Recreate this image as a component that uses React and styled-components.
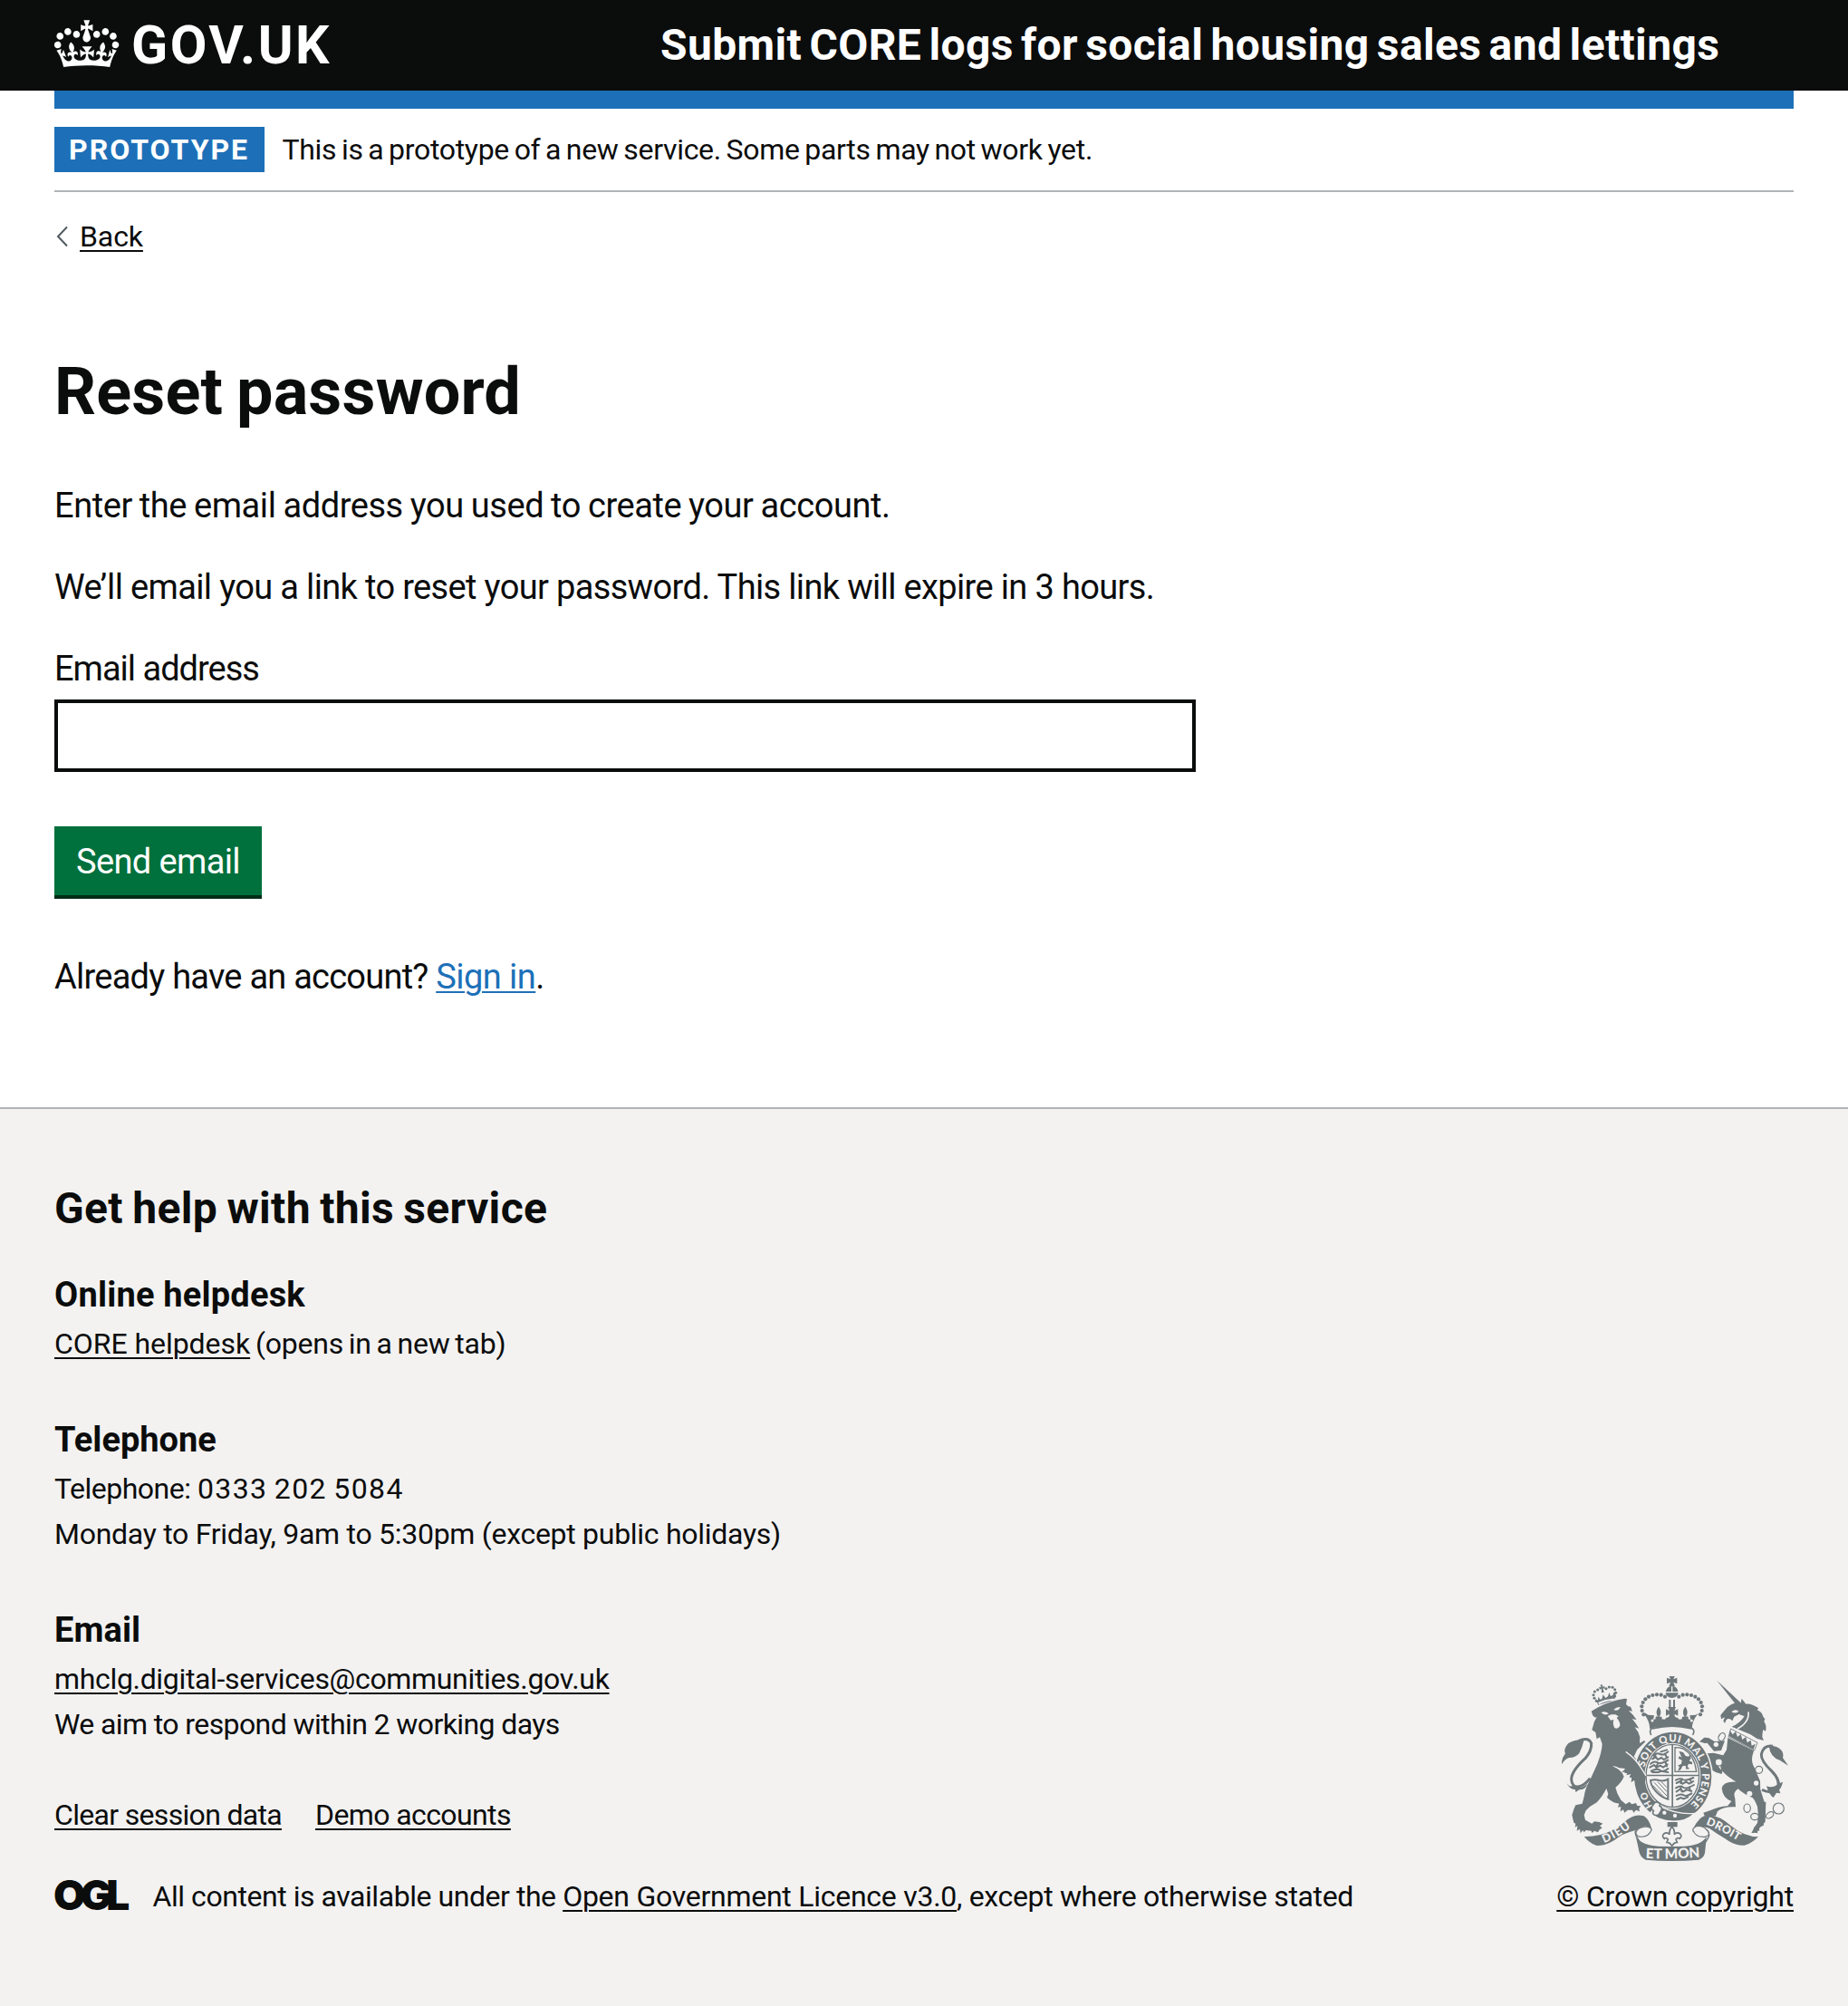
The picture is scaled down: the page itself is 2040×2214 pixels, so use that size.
import React from "react";
import styled, { createGlobalStyle } from "styled-components";

const ink = "#0b0c0c";
const paper = "#f3f2f1";
const blue = "#1d70b8";
const green = "#00703c";
const rule = "#b1b4b6";
const crestGrey = "#6e777a";

const GlobalStyle = createGlobalStyle`
  *, *::before, *::after { box-sizing: border-box; }
  body {
    margin: 0;
    background: ${paper};
    color: ${ink};
    font-family: Roboto, "Noto Sans", sans-serif;
  }
  h1, h2, h3, p, ul { margin: 0; padding: 0; }
`;

/* ---------- shared text ---------- */

const Run = styled.span`
  letter-spacing: ${(p) => p.$track || 0}px;
  word-spacing: ${(p) => p.$words || 0}px;
  white-space: pre;
`;

const Link = styled.a`
  color: ${(p) => (p.$inBody ? blue : ink)};
  letter-spacing: ${(p) => p.$track || 0}px;
  text-decoration: underline;
  text-decoration-thickness: 2px;
  text-underline-offset: ${(p) => (p.$inBody ? 3 : 4)}px;
  white-space: pre;
`;

/* ---------- header ---------- */

const Header = styled.header`
  height: 120px;
  padding: 0 60px;
  background: linear-gradient(${ink} 100px, #fff 100px);
`;

const HeaderInner = styled.div`
  display: flex;
  height: 120px;
  border-bottom: 20px solid ${blue};
`;

const LogoLink = styled.a`
  display: flex;
  width: 669px;
  padding-top: 14px;
  color: #fff;
`;

const LogoText = styled.span`
  margin-left: 13px;
  font-size: 59px;
  font-weight: 700;
  line-height: 72px;
  letter-spacing: 2.5px;
`;

const ServiceName = styled.span`
  padding-top: 20px;
  color: #fff;
  font-size: 48px;
  font-weight: 700;
  line-height: 60px;
  letter-spacing: 0.36px;
  word-spacing: -4px;
  white-space: nowrap;
`;

/* ---------- main ---------- */

const Page = styled.div`
  padding: 0 60px;
  background: #fff;
`;

const PhaseBanner = styled.div`
  display: flex;
  gap: 19.5px;
  padding: 20px 0;
  border-bottom: 2px solid ${rule};
  font-size: 32px;
  line-height: 50px;
`;

const Tag = styled.strong`
  width: 232px;
  padding-left: 16px;
  background: ${blue};
  color: #fff;
  font-weight: 700;
  letter-spacing: 2px;
`;

const BackRow = styled.div`
  display: flex;
  align-items: center;
  gap: 13px;
  height: 40px;
  margin: 29px 0 31px;
  padding-left: 2px;
  font-size: 32px;
  line-height: 40px;
`;

const Main = styled.main`
  padding: 80px 0;
  font-size: 38px;
  line-height: 50px;
`;

const Title = styled.h1`
  padding-top: 1px;
  margin-bottom: 60px;
  font-size: 72px;
  font-weight: 700;
  line-height: 80px;
  letter-spacing: 0.15px;
  word-spacing: -3px;
`;

const Paragraph = styled.p`
  margin-bottom: 40px;
`;

const Label = styled.label`
  display: block;
  margin-bottom: 9px;
`;

const EmailInput = styled.input`
  display: block;
  width: 1260px;
  height: 80px;
  margin-bottom: 60px;
  padding: 10px;
  border: 4px solid ${ink};
  border-radius: 0;
  background: #fff;
  font: inherit;
`;

const SubmitButton = styled.button`
  display: block;
  width: 229px;
  height: 76px;
  margin-bottom: 65px;
  padding: 2px 0 0 24px;
  border: 0;
  background: ${green};
  box-shadow: 0 4px 0 #002d18;
  color: #fff;
  font: 400 38px/74px Roboto, "Noto Sans", sans-serif;
  letter-spacing: -0.62px;
  text-align: left;
`;

const AccountLine = styled.p`
  margin-bottom: 39px;
`;

/* ---------- footer ---------- */

const Footer = styled.footer`
  min-height: 992px;
  padding: 80px 60px 0;
  border-top: 2px solid ${rule};
  background: ${paper};
  font-size: 32px;
  line-height: 50px;
`;

const FooterTitle = styled.h2`
  margin-bottom: 40px;
  font-size: 48px;
  line-height: 60px;
  letter-spacing: 0.35px;
  word-spacing: -2px;
`;

const FooterBottom = styled.div`
  display: flex;
  justify-content: space-between;
  align-items: flex-end;
`;

const Contact = styled.section`
  margin-bottom: ${(p) => (p.$last ? 50 : 56)}px;
`;

const ContactTitle = styled.h3`
  margin-bottom: 4px;
  font-size: 38px;
  line-height: 50px;
  letter-spacing: ${(p) => p.$track || 0}px;
`;

const InlineLinks = styled.div`
  display: flex;
  gap: 37px;
  margin-bottom: 40px;
`;

const Licence = styled.div`
  display: flex;
  white-space: nowrap;
`;

const LicenceMark = styled.span`
  width: 109.5px;
  margin-left: -1px;
  font-family: Inter, sans-serif;
  font-size: 46px;
  font-weight: 900;
  line-height: 46px;
  letter-spacing: -6px;
`;

const CopyrightBlock = styled.div`
  display: flex;
  flex-direction: column;
  align-items: flex-end;
  gap: 14px;
`;

const CrestSvg = styled.svg`
  display: block;
  width: 250px;
  height: 204px;
  margin-right: 6px;
`;

const CrestText = styled.text`
  fill: ${paper};
  font-family: Lato, sans-serif;
  font-weight: 900;
  font-size: ${(p) => p.$size}px;
  letter-spacing: ${(p) => p.$track || 0}px;
`;

function Crown() {
  return (
    <svg width="72" height="60" viewBox="0 0 36 30" fill="currentColor" aria-hidden="true">
      <path d="M6.7 12.2c1 .4 2.1-.1 2.5-1s-.1-2.1-1-2.5c-1-.4-2.1.1-2.5 1-.4 1 0 2.1 1 2.5m-4.3 2.5c1 .4 2.1-.1 2.5-1s-.1-2.1-1-2.5c-1-.4-2.1.1-2.5 1-.5 1 0 2.1 1 2.5m-1.3 4.8c1 .4 2.1-.1 2.5-1s-.1-2.1-1-2.5c-1-.4-2.1.1-2.5 1-.4 1 0 2.1 1 2.5m10.4-5.8c1 .4 2.1-.1 2.5-1s-.1-2.1-1-2.5c-1-.4-2.1.1-2.5 1s0 2.1 1 2.5m17.4-1.5c-1 .4-2.1-.1-2.5-1s.1-2.1 1-2.5c1-.4 2.1.1 2.5 1 .5 1 0 2.1-1 2.5m4.3 2.5c-1 .4-2.1-.1-2.5-1s.1-2.1 1-2.5c1-.4 2.1.1 2.5 1 .5 1 0 2.1-1 2.5m1.3 4.8c-1 .4-2.1-.1-2.5-1s.1-2.1 1-2.5c1-.4 2.1.1 2.5 1 .4 1 0 2.1-1 2.5m-10.4-5.8c-1 .4-2.1-.1-2.5-1s.1-2.1 1-2.5c1-.4 2.1.1 2.5 1s0 2.1-1 2.5m-5.3-4.9 2.4 1.3V6.5l-2.4.8c-.1-.1-.1-.2-.2-.2s1-3 1-3h-3.4l1 3c-.1.1-.2.1-.2.2-.1.1-2.4-.7-2.4-.7v3.5L17 8.8c-.1.1.1.2.2.3l-1.4 4.2c-.1.2-.1.4-.1.7 0 1.1.8 2.1 1.9 2.2h.6C19.2 16 20 15.1 20 14c0-.2 0-.4-.1-.7l-1.4-4.2c.2-.1.3-.2.3-.3m-1 20.3c4.6 0 8.9.3 12.8.9 1.1-4.6 2.4-7.2 3.8-9.1l-2.6-.9c.3 1.3.3 1.9 0 2.8-.4-.4-.8-1.2-1.1-2.4l-1.2 4.2c.8-.5 1.3-.9 2-.9-1.1 2.6-2.7 3.2-3.6 3-1.2-.2-1.7-1.3-1.5-2.2.3-1.2 1.6-1.5 2.1-.1 1.1-2.4-.8-3.1-2.1-2.4 1.9-1.9 2.2-3.6.6-5.7-2.2 1.7-2.2 3.3-1.2 5.6-1.3-1.5-3.3-.7-2.5 1.7.9-1.4 2.1-.5 2 .8-.2 1.2-1.7 2.1-3.7 2-2.8-.2-3-2.2-3-3.7.7-.1 1.9.6 3 2l.4-4.4c-1.1 1.2-2.2 1.4-3.3 1.4.4-1.2 2.1-3.1 2.1-3.1h-5.5s1.8 2 2.1 3.1c-1.1 0-2.2-.3-3.3-1.4l.4 4.4c1-1.4 2.3-2.1 3-2-.1 1.6-.2 3.5-3 3.7-1.9.2-3.5-.8-3.7-2-.2-1.3 1-2.2 2-.8.7-2.3-1.2-3.1-2.5-1.7 1-2.3 1-4-1.2-5.6-1.6 2-1.3 3.8.6 5.7-1.3-.7-3.2 0-2.1 2.4.5-1.4 1.8-1.1 2.1.1.2.9-.4 1.9-1.5 2.2-.9.2-2.5-.5-3.6-3 .7 0 1.3.4 2 .9L5 20.4c-.3 1.2-.7 1.9-1.2 2.4-.3-.8-.2-1.5 0-2.8l-2.6.9C2.7 22.8 4 25.4 5.1 30c3.8-.5 8.2-.9 12.7-.9" />
    </svg>
  );
}

/* Beads of the royal crown, left arch then right arch */
const crownBeads = [
  [343, 187], [338, 174], [337, 160], [341, 147], [349, 136], [360, 128], [373, 123], [387, 121], [401, 122], [414, 128],
  [531, 187], [536, 174], [537, 160], [533, 147], [525, 136], [514, 128], [501, 123], [487, 121], [473, 122], [460, 128],
];
const lionBeads = [
  [187, 142], [180, 133], [177, 122], [181, 111], [191, 105],
  [248, 126], [251, 115], [248, 104], [240, 97], [229, 96], [219, 101],
];

function Crest() {
  const g = crestGrey;
  const b = paper;
  return (
    <CrestSvg viewBox="72 60 750 612" fill={g} stroke="none" role="img" aria-label="Royal coat of arms">
      {/* royal crown */}
      <path d="M428 60h18l-4 10 12-5v20l-12-5 5 14h-20l5-14-12 5v-20l12 5z" />
      <path d="M417 111a20 18 0 0 1 18-18v18zM439 93a20 18 0 0 1 18 18h-18zM416 115h42a21 17 0 0 1-42 0z" />
      {crownBeads.map(([x, y]) => (
        <circle key={`${x}-${y}`} cx={x} cy={y} r="6.3" />
      ))}
      <path d="M427 138h6v30h-6zM441 138h6v30h-6z" />
      <path d="M349 182l9 6 20 2-3 14 8-2c-2-7 2-12 8-7-7-12-7-22 2-34 9 12 9 22 2 34 6-4 11 0 8 7l10 1 8-8-1 4 8-6v-8l-11 6v-22l12 6-5-13h26l-5 13 12-6v22l-11-6v8l8 6-1-4 8 8 10-1c-3-7 2-11 8-7-7-12-7-22 2-34 9 12 9 22 2 34 6-5 10 0 8 7l8 2-3-14 20-2 9-6c-17 20-22 38-21 52-40-11-101-11-141 0 1-14-4-32-21-52z" />
      <circle cx="372" cy="207" r="4.5" fill={b} />
      <circle cx="502" cy="207" r="4.5" fill={b} />
      <path d="M368 255c-7-15-2-22 7-22 40-10 85-10 124 0 10 0 14 7 7 22" fill="none" stroke={g} strokeWidth="5" />

      {/* lion crown */}
      {lionBeads.map(([x, y]) => (
        <circle key={`${x}-${y}`} cx={x} cy={y} r="4.6" />
      ))}
      <path transform="translate(206 102) rotate(-12)" d="M-4-14h8l-2 8 7-2v9l-7-2 2 13h-9l3-13-7 2v-9l7 2z" />
      <path d="M184 136l8 5 1-13 7 9 5-2 4-14 8 11 8-5 4-13 5 12 7-3 3-9 8-2-5 27-54 16z" />
      <path d="M192 147q28-14 56-13l-2 6q-28 1-50 14z" fill={b} />

      {/* lion */}
      <path d="M172 182L170 176 190 164Q235 141 280 134L288 135 285 153 292 160 300 161 306 176 294 174 308 188 320 205 305 201 317 216 328 233 314 229 325 245 331 262 330 282 345 273 349 277 322 303 311 326 334 352 348 380 351 400 346 412 340 402 336 418 326 408 316 416 314 404 302 410 304 396 296 394 302 384 286 388 292 376 270 378 284 366 262 364Q250 356 240 358 272 372 278 392 270 412 250 428L256 448 268 470 284 484 296 476 304 484 318 480 322 489 334 490 328 498 330 508 318 503 310 512 306 503 290 503 280 512 276 502 266 508 268 492 258 494 262 482 244 478 232 470 222 462 226 450 220 432Q204 462 188 478L165 492 152 505 146 520 150 536 172 548 180 541 196 543 208 548 198 556 206 562 196 569 192 577 180 572 172 579 170 572 152 570 146 577 142 570 134 580 132 566 122 572 124 556 116 560 118 548 112 545 106 520 112 500 118 487 140 482 146 458Q150 430 165 405L190 350Q205 310 206 284L198 262 188 268 184 246 172 238 180 210 188 196Q176 198 172 182Z" />
      <path d="M202 180q14-6 26 4-14 8-26-4zM244 172q8-10 22-10-4 14-22 10z" fill={b} />
      <path d="M224 192l12-5h14l10 6-6 5q14 16 10 28-8 12-18 4-6-12-2-26l-10 2z" fill={b} />
      {/* lion tail */}
      <path d="M128 274q32-14 42 8 2 24-20 50-46 42-46 70 2 26 22 24 20-2 40-28" fill="none" stroke={g} strokeWidth="9" />
      <path d="M146 270q-28-2-52 12-18 20-10 34-14 18-12 36 10-18 24-22 22 0 34-15 10-18 16-45z" />
      <path d="M88 412q8 18 22 10 20 16 48-6-8 20-28 20l-12 8-1-8q-22-2-29-24z" />

      {/* unicorn */}
      <path d="M586 74l72 92 12-13z" />
      <path d="M662 162l6-28 14 18q18-2 42 14l-5 6q16 6 20 22l6 8-3 8q10 14 5 32l-8-5q-3 12-3 24l5 12-22-6-22-14-62-26q24-8 42-34l-18-7-16 8-6 14q-10-12-20-4l-5 12-5-8 5-12-12 6-2-13 22-26q18-16 42-17z" />
      <path d="M634 178q14-12 24-2-10 10-24 2z" fill={b} />
      <path d="M690 178q4 34-36 56" fill="none" stroke={b} strokeWidth="5" />
      <path d="M632 234l88 46-10 26-86-45z" fill={b} stroke={g} strokeWidth="2.5" />
      <path d="M626 259l3-20 9 14 10-10 6 18 11-9 5 18 12-9 4 19 12-8 3 18 12-6-6 19z" />
      <path d="M622 264l86 43-5 18q-4 22 8 40l18 42 1 44-12 20-3 6 33-1-2 66-18 20-10 16-18 1 20-34q5-28 0-54l-10-26q-36-14-54-32-18 10-10 32l2 28q-42-2-60 14l-6 16-36 1-5-12 24-8q26-12 56-14l13-16q-28-10-32-42 4-24 48-22-50-30-52-50-4-22 20-56z" />
      <path d="M690 446l40-10 16 50-2 20-20-4q-8-32-34-56zM737 528l4 26-16 6 2 12-8-2 2 10-12-4-6 4 6-20 18-18z" />
      <path d="M612 274l-34 2-20-12-14-1-16 14 18 5 8-1 22 27 24-2zM606 322l-30-8-26 2-8 4 12 8 4 6q-2 18 10 36l14 8 20 6 2-10 6-12-10 8q-14-12-12-28l24-2z" />
      <path d="M735 436q30 14 52 0 12-30-20-62-36-34-34-56 8-32 38-26" fill="none" stroke={g} strokeWidth="9" />
      <path d="M758 290q30 0 42 16 8 12 4 24l18 26-28-18q-32-10-36-48zM750 424q22 8 38-8l16-6q-4 18-12 26l4 12-13-2-10 16q-14-8-23-38z" />
      {/* chain */}
      <g fill="none" stroke={g} strokeWidth="3.5">
        <ellipse cx="602" cy="261" rx="10" ry="14" transform="rotate(30 602 261)" fill={b} />
        <circle cx="592" cy="345" r="12" fill={b} />
        <circle cx="725" cy="370" r="12" fill={b} />
        <ellipse cx="686" cy="497" rx="11" ry="14" fill={b} />
        <ellipse cx="711" cy="525" rx="13" ry="11" fill={b} />
        <ellipse cx="761" cy="520" rx="14" ry="9" transform="rotate(-35 761 520)" />
        <circle cx="790" cy="498" r="18" />
      </g>
      <g fill={b}>
        <circle cx="583" cy="286" r="8" />
        <circle cx="716" cy="414" r="8" />
        <circle cx="694" cy="449" r="9" />
      </g>

      {/* garter and shield */}
      <ellipse cx="440" cy="392" rx="133" ry="151" fill={b} />
      <ellipse cx="440" cy="392" rx="128" ry="147" />
      <ellipse cx="439" cy="390" rx="93" ry="109" fill={b} />
      <ellipse cx="439" cy="390" rx="88" ry="104" fill="none" stroke={g} strokeWidth="4" />
      <path d="M436 286h5v206h-5zM352 386h174v5H352z" />
      {/* foreleg over the garter */}
      <path d="M286 312Q318 334 336 366L351 392 347 416 340 404 336 419 326 408 316 417 313 404 302 410 304 396 296 394 302 384 280 380z" />
      <path d="M284 310Q316 332 335 364L351 390" fill="none" stroke={b} strokeWidth="4" />
      {/* motto */}
      <path id="motto-low" d="M374 490Q350 456 342 390" fill="none" />
      <path id="motto-top" d="M346 362A97 115 0 1 1 462 504" fill="none" />
      <CrestText $size={31} $track={4}>
        <textPath href="#motto-low">HO</textPath>
      </CrestText>
      <CrestText $size={34} $track={1.9}>
        <textPath href="#motto-top">SOIT QUI MAL Y PENSE</textPath>
      </CrestText>

      {/* lions passant */}
      <g fill="none" stroke={g} strokeWidth="6" strokeLinecap="round">
        <path d="M376 322q10-10 22-4t26-8M372 334l12-6 6 8 12-6 8 6 14-8M366 350q12-10 24-4t34-8M364 362l14-8 8 8 12-6 10 6 14-10M368 374q20-10 30-2t26-6M400 310l20-6M384 318l-8 14M414 316l6 14M390 350l-6 12M416 346l4 12M372 378l20 0 10-4 22 4" />
        <path d="M450 404q12-8 22-2t36-6M452 414l12-6 8 8 12-6 10 6 14-8M450 430q16-10 24-2t36-8M452 442l12-8 10 8 12-6 16 4M452 456q14-8 24-2t26-6M454 468l12-6 10 4 14-6M470 400l-4 14M496 400l6 12M466 430l4 12M494 428l4 12" />
      </g>
      <path d="M447 296v80h71q-6-54-44-76-14-4-27-4z" fill="none" stroke={g} strokeWidth="4" />
      <path d="M460 308l14 4 8 12 10 2 4-6 4 12-6 8 10 4 0 8-12-2-4 10 8 6-12 2-2-12-10 2-6 12-10 4 6-14-6-4 12-6 2-12-12-6 4-8 8 6z" />
      {/* harp */}
      <path d="M366 405q16-4 28 0 16 4 30-4v66q-24-6-42-28-14-14-16-34z" fill={b} stroke={g} strokeWidth="6" />
      <path d="M378 412l42 44M390 410l30 32M402 410l18 18M374 422l38 40" fill="none" stroke={g} strokeWidth="3" />
      {/* buckle and strap */}
      <path d="M378 492l8-6 16 4q56 28 112 22 10-2 22-12l-6 18q-24 36-88 36-44-2-72-22l-10-14z" fill={b} />
      <path d="M400 494q54 26 106 22-22 24-72 22-34-4-50-14z" />
      <path d="M376 484q6-10 14-6 10 2 6 12 10 4 6 14l-6 10q-6 10-16 6-10-4-4-14-8-6-6-12 2-6 6-10z" fill={b} stroke={g} strokeWidth="5" />
      <circle cx="412" cy="512" r="6.5" fill={b} />
      <circle cx="447" cy="522" r="6.5" fill={b} />

      {/* ribbon */}
      <path d="M146 591q76 2 134-48 30-30 64-20 16 8 26 42-14-10-26-8-16 2-30 14-32 8-54 22-36 28-72 28-22-6-42-30z" />
      <path d="M723 592q-46 0-90-36-38-34-74-36-22 0-36 20-12 12-18 36 14-14 30-16 14-2 26 4 28 20 52 34 32 24 64 22 24-6 46-28z" />
      <path d="M336 560q-28 6-18 28 8 14 22 34 96 8 196 0 16-12 24-34 2-20-22-26" fill="none" stroke={g} strokeWidth="4" />
      <path d="M332 562q30-10 38 6-12 30-46 22-16-14 8-28zM542 560q-28-10-36 8 8 26 40 24 28-6-4-32z" fill={b} stroke={g} strokeWidth="3.5" />
      <path d="M316 588q16 38 120 38t116-38l-6 58q-4 16-20 22-90 8-176 0-18-8-22-28-6-32-12-52z" />
      <path d="M422 543h33v16h-33z" />
      <path d="M437 558q-12 14-7 26-10-10-20-2-8 8 2 16 4-6 12 2l-4 10q10 0 17 12 7-12 17-12l-4-10q8-8 12-2 10-8 2-16-10-8-20 2 5-12-7-26z" fill={b} stroke={g} strokeWidth="5" />
      <path id="dieu" d="M212 612Q262 594 330 540" fill="none" />
      <path id="droit" d="M549 551Q596 566 700 632" fill="none" />
      <path id="etmon" d="M350 662Q438 668 560 656" fill="none" />
      <CrestText $size={38} $track={4}>
        <textPath href="#dieu">DIEU</textPath>
      </CrestText>
      <CrestText $size={37} $track={1}>
        <textPath href="#droit">DROIT</textPath>
      </CrestText>
      <CrestText $size={46}>
        <textPath href="#etmon">ET MON</textPath>
      </CrestText>
    </CrestSvg>
  );
}

export default function App() {
  return (
    <>
      <GlobalStyle />
      <Header>
        <HeaderInner>
          <LogoLink>
            <Crown />
            <LogoText>GOV.UK</LogoText>
          </LogoLink>
          <ServiceName>Submit CORE logs for social housing sales and lettings</ServiceName>
        </HeaderInner>
      </Header>

      <Page>
        <PhaseBanner>
          <Tag>PROTOTYPE</Tag>
          <Run $track={-0.3} $words={-2}>This is a prototype of a new service. Some parts may not work yet.</Run>
        </PhaseBanner>
        <BackRow>
          <svg width="13" height="24" viewBox="0 0 13 24" fill="none" stroke="#505a5f" strokeWidth="2" aria-hidden="true">
            <path d="M12 1.5L2 12l10 10.5" />
          </svg>
          <Link $track={-0.1}>Back</Link>
        </BackRow>

        <Main>
          <Title>Reset password</Title>
          <Paragraph>
            <Run $track={-0.44} $words={-1}>Enter the email address you used to create your account.</Run>
          </Paragraph>
          <Paragraph>
            <Run $track={-0.65}>We’ll email you a link to reset your password. This link will expire in 3 hours.</Run>
          </Paragraph>
          <Label htmlFor="email">
            <Run $track={-1}>Email address</Run>
          </Label>
          <EmailInput id="email" type="email" />
          <SubmitButton type="button">Send email</SubmitButton>
          <AccountLine>
            <Run $track={-0.76}>{"Already have an account? "}</Run>
            <Link $inBody $track={-0.54}>Sign in</Link>.
          </AccountLine>
        </Main>
      </Page>

      <Footer>
        <FooterTitle>Get help with this service</FooterTitle>
        <Contact>
          <ContactTitle $track={0.2}>Online helpdesk</ContactTitle>
          <p>
            <Link $track={-0.05}>CORE helpdesk</Link>
            <Run $track={-0.2} $words={-2}> (opens in a new tab)</Run>
          </p>
        </Contact>
        <Contact>
          <ContactTitle>Telephone</ContactTitle>
          <p>
            <Run $track={-0.5}>{"Telephone: "}</Run>
            <Run $track={1.4} $words={-2}>0333 202 5084</Run>
          </p>
          <p>
            <Run $track={-0.28}>Monday to Friday, 9am to 5:30pm (except public holidays)</Run>
          </p>
        </Contact>
        <FooterBottom>
          <div>
            <Contact $last>
              <ContactTitle $track={0.1}>Email</ContactTitle>
              <p>
                <Link $track={-0.33}>mhclg.digital-services@communities.gov.uk</Link>
              </p>
              <p>
                <Run $track={-0.6}>We aim to respond within 2 working days</Run>
              </p>
            </Contact>
            <InlineLinks>
              <Link $track={-0.68}>Clear session data</Link>
              <Link $track={-0.6}>Demo accounts</Link>
            </InlineLinks>
            <Licence>
              <LicenceMark>OGL</LicenceMark>
              <Run $track={-0.45}>{"All content is available under the "}</Run>
              <Link $track={-0.26}>Open Government Licence v3.0</Link>
              <Run $track={-0.34}>, except where otherwise stated</Run>
            </Licence>
          </div>
          <CopyrightBlock>
            <Crest />
            <Link $track={-0.19}>© Crown copyright</Link>
          </CopyrightBlock>
        </FooterBottom>
      </Footer>
    </>
  );
}
